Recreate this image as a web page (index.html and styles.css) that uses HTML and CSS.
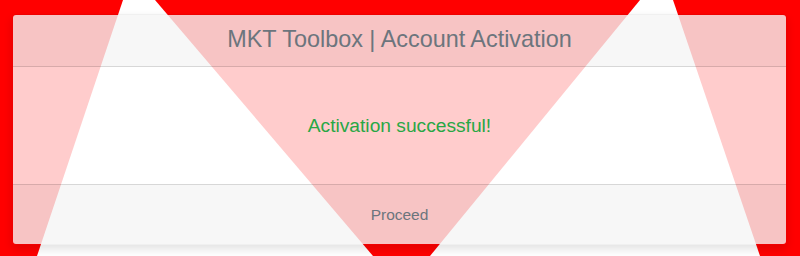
FILE: index.html
```html
<!DOCTYPE html>
<html lang="en">
<head>
    <meta charset="UTF-8">
    <meta name="viewport" content="width=device-width, initial-scale=1.0">
    <title>MKT Toolbox | Account Activation</title>
    <link rel="stylesheet" href="styles.css">
</head>
<body>
<svg class="backdrop" viewBox="0 0 800 256" preserveAspectRatio="none" aria-hidden="true">
    <rect width="800" height="256" fill="#ff0000"/>
    <polygon points="123,0 155,0 373,256 37,256" fill="#ffffff"/>
    <polygon points="640,0 673,0 760,256 430,256" fill="#ffffff"/>
</svg>

<div class="wrapper">
    <div class="card">
        <div class="card-header">MKT Toolbox | Account Activation</div>
        <div class="card-body">
            <p class="status">Activation successful!</p>
        </div>
        <div class="card-footer">
            <a href="#" class="proceed">Proceed</a>
        </div>
    </div>
</div>
</body>
</html>
```

FILE: styles.css
```css
* {
    box-sizing: border-box;
    margin: 0;
    padding: 0;
}

html, body {
    height: 256px;
    overflow: hidden;
}

body {
    font-family: 'Liberation Sans', Arial, sans-serif;
    color: #6c757d;
    position: relative;
}

.backdrop {
    position: absolute;
    top: 0;
    left: 0;
    width: 100%;
    height: 100%;
    z-index: -1;
}

.wrapper {
    padding: 14px 13px 0 12px;
}

.card {
    display: flex;
    flex-direction: column;
    height: 231px;
    border: 1px solid rgba(0, 0, 0, 0.06);
    border-radius: 4px;
    box-shadow: 0 4px 10px rgba(0, 0, 0, 0.12);
    overflow: hidden;
}

.card-header {
    height: 52px;
    display: flex;
    align-items: center;
    justify-content: center;
    font-size: 23.4px;
    padding-bottom: 2px;
    background-color: rgba(245, 245, 245, 0.8);
    border-bottom: 1px solid rgba(0, 0, 0, 0.13);
    color: #6c757d;
}

.card-body {
    height: 117px;
    display: flex;
    align-items: center;
    justify-content: center;
    background-color: rgba(255, 255, 255, 0.8);
}

.status {
    color: #28a745;
    font-size: 19.2px;
}

.card-footer {
    flex: 1;
    display: flex;
    align-items: center;
    justify-content: center;
    background-color: rgba(245, 245, 245, 0.8);
    border-top: 1px solid rgba(0, 0, 0, 0.13);
}

.proceed {
    color: #6c757d;
    font-size: 15.5px;
    text-decoration: none;
}
```
